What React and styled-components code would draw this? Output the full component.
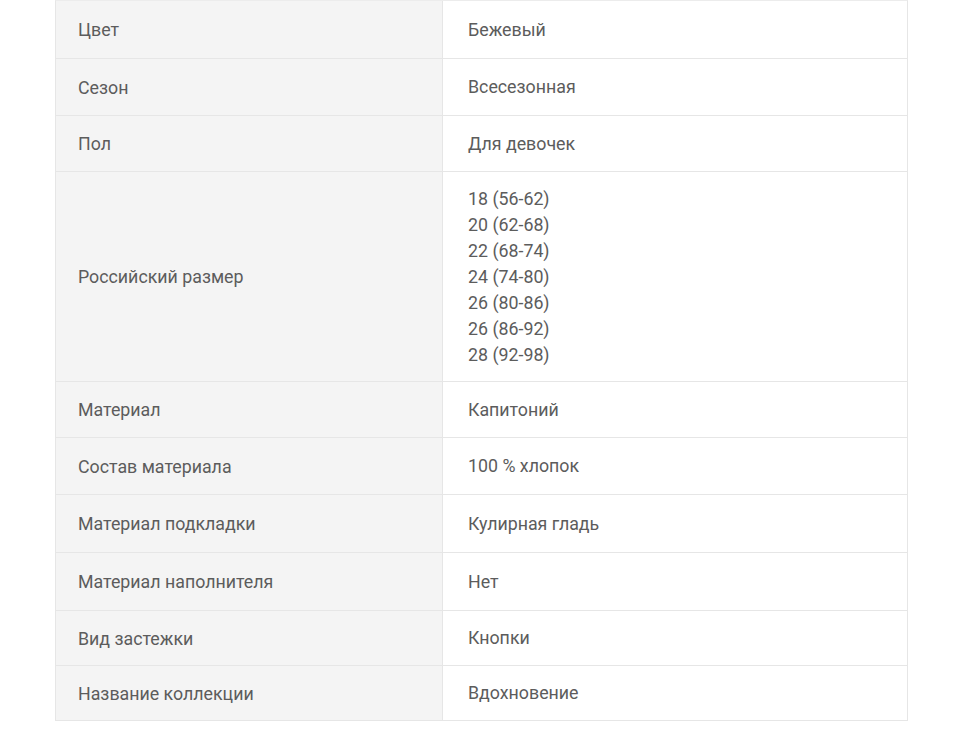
import React from 'react';
import styled, { createGlobalStyle } from 'styled-components';

const GlobalStyle = createGlobalStyle`
  body {
    margin: 0;
    background: #ffffff;
    font-family: Roboto, "Liberation Sans", Arial, sans-serif;
  }
`;

const Page = styled.div`
  width: 960px;
  height: 749px;
  padding: 0 52px 0 55px;
  box-sizing: border-box;
`;

const Table = styled.div`
  border: 1px solid #e6e6e6;
  border-top-color: #ececec;
  display: flex;
  flex-direction: column;
`;

const Row = styled.div`
  display: grid;
  grid-template-columns: 387px 1fr;
  height: ${(p) => p.h}px;
  border-bottom: 1px solid #e6e6e6;
  box-sizing: border-box;
  &:last-child {
    border-bottom: none;
  }
`;

const Label = styled.div`
  background: #f4f4f4;
  border-right: 1px solid #e6e6e6;
  display: flex;
  align-items: center;
  padding-left: 22px;
  font-size: 17.8px;
  color: #5c5c5c;
`;

const Value = styled.div`
  background: #ffffff;
  display: flex;
  flex-direction: column;
  justify-content: center;
  padding-left: 25px;
  font-size: 17.8px;
  line-height: 26px;
  color: #5c5c5c;
`;

const rows = [
  { label: 'Цвет', value: ['Бежевый'], h: 58 },
  { label: 'Сезон', value: ['Всесезонная'], h: 57 },
  { label: 'Пол', value: ['Для девочек'], h: 56 },
  {
    label: 'Российский размер',
    value: ['18 (56-62)', '20 (62-68)', '22 (68-74)', '24 (74-80)', '26 (80-86)', '26 (86-92)', '28 (92-98)'],
    h: 210,
  },
  { label: 'Материал', value: ['Капитоний'], h: 56 },
  { label: 'Состав материала', value: ['100 % хлопок'], h: 57 },
  { label: 'Материал подкладки', value: ['Кулирная гладь'], h: 58 },
  { label: 'Материал наполнителя', value: ['Нет'], h: 58 },
  { label: 'Вид застежки', value: ['Кнопки'], h: 55 },
  { label: 'Название коллекции', value: ['Вдохновение'], h: 54 },
];

const App = () => {
  return (
    <Page>
      <GlobalStyle />
      <Table>
        {rows.map((r) => (
          <Row key={r.label} h={r.h}>
            <Label>{r.label}</Label>
            <Value>
              {r.value.map((v, i) => (
                <span key={i}>{v}</span>
              ))}
            </Value>
          </Row>
        ))}
      </Table>
    </Page>
  );
};

export default App;
